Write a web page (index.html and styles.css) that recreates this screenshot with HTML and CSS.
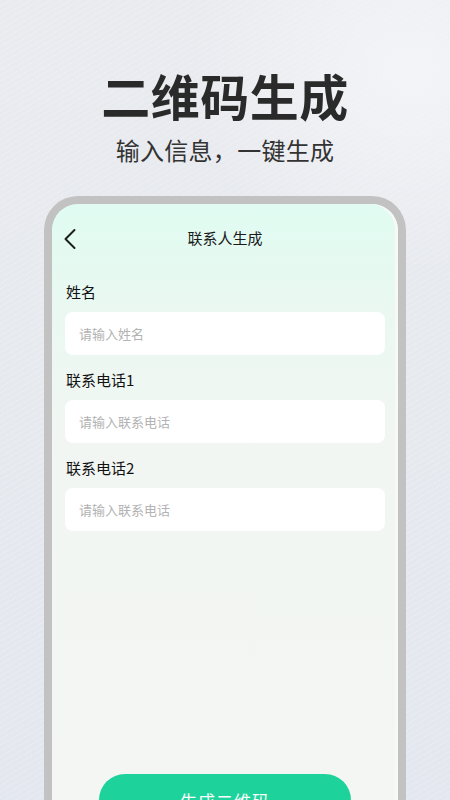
FILE: index.html
```html
<!DOCTYPE html>
<html lang="zh-CN">
<head>
<meta charset="utf-8">
<title>二维码生成</title>
<link rel="stylesheet" href="styles.css">
</head>
<body>
<div class="page">
  <header class="hero">
    <h1 class="hero-title">二维码生成</h1>
    <p class="hero-sub">输入信息，一键生成</p>
  </header>
  <div class="phone">
    <div class="screen">
      <div class="nav">
        <svg class="back" width="14" height="22" viewBox="0 0 14 22"><path d="M11.5 2 L2.5 11 L11.5 20" fill="none" stroke="#1e1e1e" stroke-width="2" stroke-linecap="round" stroke-linejoin="round"/></svg>
        <span class="nav-title">联系人生成</span>
      </div>
      <form class="form">
        <label class="label first">姓名</label>
        <div class="input"><span class="ph">请输入姓名</span></div>
        <label class="label">联系电话1</label>
        <div class="input"><span class="ph">请输入联系电话</span></div>
        <label class="label">联系电话2</label>
        <div class="input"><span class="ph">请输入联系电话</span></div>
        <div class="btn-row"><div class="btn">生成二维码</div></div>
      </form>
    </div>
  </div>
</div>
</body>
</html>
```

FILE: styles.css
```css
* { box-sizing: border-box; }
html, body { margin: 0; padding: 0; }
body {
  width: 450px;
  height: 800px;
  overflow: hidden;
  font-family: "Noto Sans CJK SC", "Noto Sans", sans-serif;
  background:
    radial-gradient(ellipse 220px 200px at 410px 70px, rgba(245,246,249,0.85), rgba(245,246,249,0) 100%),
    repeating-linear-gradient(150deg, rgba(255,255,255,0.18) 0 1px, rgba(255,255,255,0) 1px 5px),
    linear-gradient(180deg, #e9ebef 0%, #e6e9ee 50%, #e3e7ef 100%);
}
.page { display: flex; flex-direction: column; height: 800px; }
.hero { display: flex; flex-direction: column; align-items: center; padding-top: 70px; }
.hero-title {
  margin: 0;
  font-size: 49px;
  line-height: 50px;
  font-weight: 700;
  color: #2a2a2a;
  letter-spacing: 0.5px;
}
.hero-sub {
  margin: 18px 0 0;
  font-size: 24px;
  line-height: 24px;
  font-weight: 400;
  color: #333;
  letter-spacing: 0.3px;
}
.phone {
  margin: 34px 44px 0;
  flex: 1;
  border: 8px solid #c2c2c2;
  border-bottom: none;
  border-radius: 34px 34px 0 0;
  overflow: hidden;
}
.screen {
  height: 100%;
  border-radius: 26px 26px 0 0;
  background: linear-gradient(180deg, #e0fcf2 0%, #eaf8f1 18%, #f2f6f3 40%, #f3f6f3 100%);
  box-shadow: inset -3px 0 0 #f7f9f7;
}
.nav {
  height: 68px;
  display: flex;
  align-items: center;
  justify-content: center;
  position: relative;
}
.back { position: absolute; left: 11px; top: 24px; }
.nav-title { font-size: 15px; color: #1a1a1a; line-height: 20px; }
.form { display: flex; flex-direction: column; padding: 0 13px; }
.label {
  display: block;
  font-size: 15px;
  line-height: 20px;
  color: #111;
  margin: 15px 0 10px 1px;
}
.label.first { margin-top: 10px; }
.input {
  height: 43px;
  background: #fff;
  border-radius: 8px;
  display: flex;
  align-items: center;
  padding-left: 14px;
}
.ph { font-size: 13px; color: #b3b3b3; }
.btn-row { display: flex; justify-content: center; margin-top: 243px; }
.btn {
  width: 252px;
  height: 52px;
  border-radius: 26px;
  background: #1ed39b;
  color: #fff;
  font-size: 17px;
  display: flex;
  align-items: center;
  justify-content: center;
  letter-spacing: 1px;
}
```
